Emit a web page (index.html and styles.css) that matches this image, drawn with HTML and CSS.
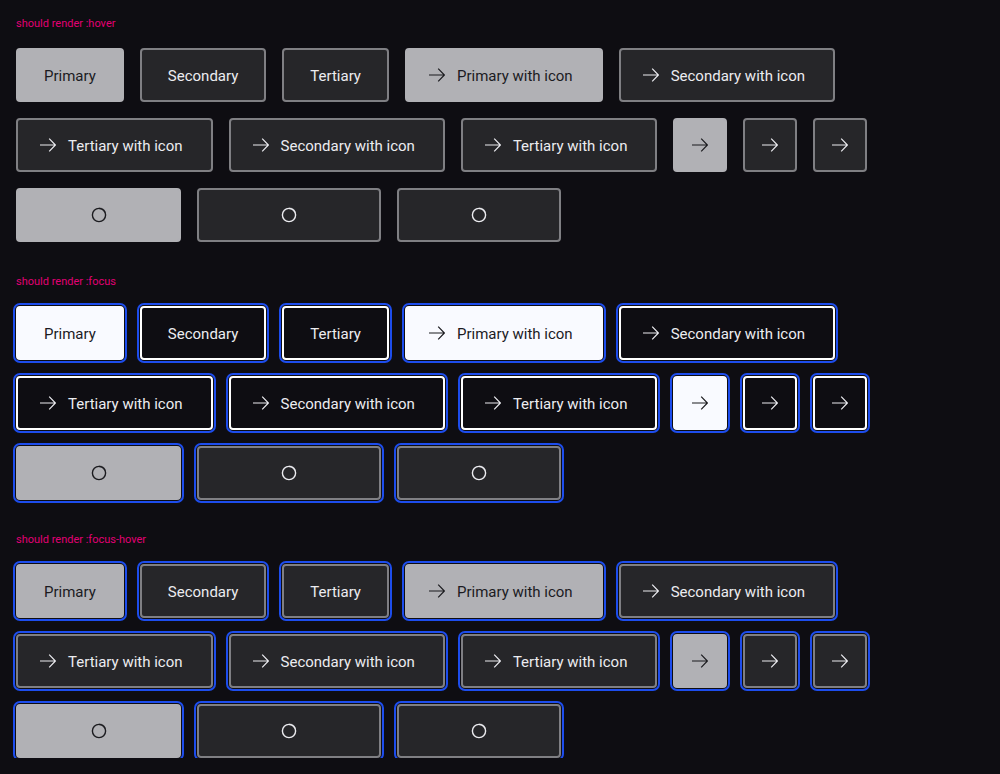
FILE: index.html
```html
<!DOCTYPE html>
<html>
<head>
<meta charset="utf-8">
<link rel="stylesheet" href="styles.css">
</head>
<body>
<svg width="0" height="0" style="position:absolute">
  <defs>
    <symbol id="arrow" viewBox="0 0 16 16">
      <path d="M0 8 H15.4 M9.2 1.6 L15.4 8 L9.2 14.4" fill="none" stroke="currentColor" stroke-width="1.2"/>
    </symbol>
    <symbol id="spin" viewBox="0 0 16 16">
      <circle cx="8" cy="8" r="6.6" fill="none" stroke="currentColor" stroke-width="1.4"/>
      <path d="M8 1.4 A6.6 6.6 0 0 1 14.2 5.8" fill="none" stroke="currentColor" stroke-opacity="0.5" stroke-width="1.6" class="fade"/>
    </symbol>
  </defs>
</svg>

<section class="section hover">
  <div class="label">should render :hover</div>
  <div class="rows">
    <div class="row">
      <button class="btn primary">Primary</button>
      <button class="btn secondary">Secondary</button>
      <button class="btn tertiary">Tertiary</button>
      <button class="btn primary with-icon"><svg class="ic"><use href="#arrow"/></svg>Primary with icon</button>
      <button class="btn secondary with-icon"><svg class="ic"><use href="#arrow"/></svg>Secondary with icon</button>
    </div>
    <div class="row">
      <button class="btn tertiary with-icon"><svg class="ic"><use href="#arrow"/></svg>Tertiary with icon</button>
      <button class="btn secondary with-icon"><svg class="ic"><use href="#arrow"/></svg>Secondary with icon</button>
      <button class="btn tertiary with-icon"><svg class="ic"><use href="#arrow"/></svg>Tertiary with icon</button>
      <button class="btn primary icon-only"><svg class="ic"><use href="#arrow"/></svg></button>
      <button class="btn secondary icon-only"><svg class="ic"><use href="#arrow"/></svg></button>
      <button class="btn tertiary icon-only"><svg class="ic"><use href="#arrow"/></svg></button>
    </div>
    <div class="row">
      <button class="btn primary loading w-p"><svg class="sp"><use href="#spin"/></svg></button>
      <button class="btn secondary loading w-s"><svg class="sp"><use href="#spin"/></svg></button>
      <button class="btn tertiary loading w-t"><svg class="sp"><use href="#spin"/></svg></button>
    </div>
  </div>
</section>

<section class="section focus">
  <div class="label">should render :focus</div>
  <div class="rows">
    <div class="row">
      <button class="btn primary">Primary</button>
      <button class="btn secondary">Secondary</button>
      <button class="btn tertiary">Tertiary</button>
      <button class="btn primary with-icon"><svg class="ic"><use href="#arrow"/></svg>Primary with icon</button>
      <button class="btn secondary with-icon"><svg class="ic"><use href="#arrow"/></svg>Secondary with icon</button>
    </div>
    <div class="row">
      <button class="btn tertiary with-icon"><svg class="ic"><use href="#arrow"/></svg>Tertiary with icon</button>
      <button class="btn secondary with-icon"><svg class="ic"><use href="#arrow"/></svg>Secondary with icon</button>
      <button class="btn tertiary with-icon"><svg class="ic"><use href="#arrow"/></svg>Tertiary with icon</button>
      <button class="btn primary icon-only"><svg class="ic"><use href="#arrow"/></svg></button>
      <button class="btn secondary icon-only"><svg class="ic"><use href="#arrow"/></svg></button>
      <button class="btn tertiary icon-only"><svg class="ic"><use href="#arrow"/></svg></button>
    </div>
    <div class="row">
      <button class="btn primary loading w-p"><svg class="sp"><use href="#spin"/></svg></button>
      <button class="btn secondary loading w-s"><svg class="sp"><use href="#spin"/></svg></button>
      <button class="btn tertiary loading w-t"><svg class="sp"><use href="#spin"/></svg></button>
    </div>
  </div>
</section>

<section class="section focus-hover">
  <div class="label">should render :focus-hover</div>
  <div class="rows">
    <div class="row">
      <button class="btn primary">Primary</button>
      <button class="btn secondary">Secondary</button>
      <button class="btn tertiary">Tertiary</button>
      <button class="btn primary with-icon"><svg class="ic"><use href="#arrow"/></svg>Primary with icon</button>
      <button class="btn secondary with-icon"><svg class="ic"><use href="#arrow"/></svg>Secondary with icon</button>
    </div>
    <div class="row">
      <button class="btn tertiary with-icon"><svg class="ic"><use href="#arrow"/></svg>Tertiary with icon</button>
      <button class="btn secondary with-icon"><svg class="ic"><use href="#arrow"/></svg>Secondary with icon</button>
      <button class="btn tertiary with-icon"><svg class="ic"><use href="#arrow"/></svg>Tertiary with icon</button>
      <button class="btn primary icon-only"><svg class="ic"><use href="#arrow"/></svg></button>
      <button class="btn secondary icon-only"><svg class="ic"><use href="#arrow"/></svg></button>
      <button class="btn tertiary icon-only"><svg class="ic"><use href="#arrow"/></svg></button>
    </div>
    <div class="row">
      <button class="btn primary loading w-p"><svg class="sp"><use href="#spin"/></svg></button>
      <button class="btn secondary loading w-s"><svg class="sp"><use href="#spin"/></svg></button>
      <button class="btn tertiary loading w-t"><svg class="sp"><use href="#spin"/></svg></button>
    </div>
  </div>
</section>
</body>
</html>
```

FILE: styles.css
```css
html, body {
  margin: 0;
  padding: 0;
  background: #0e0d12;
}
body {
  padding: 17px 16px 0 16px;
  font-family: Roboto, "Liberation Sans", sans-serif;
  display: flex;
  flex-direction: column;
  gap: 33px;
}
.section {
  display: flex;
  flex-direction: column;
  gap: 18px;
}
.label {
  color: #e20074;
  font-size: 11px;
  line-height: 13px;
  height: 13px;
}
.rows {
  display: flex;
  flex-direction: column;
  gap: 16px;
}
.row {
  display: flex;
  gap: 16px;
}
.btn {
  box-sizing: border-box;
  height: 54px;
  margin: 0;
  padding: 1px 26px 0 26px;
  border: 2px solid transparent;
  border-radius: 4px;
  display: inline-flex;
  align-items: center;
  justify-content: center;
  font-family: Roboto, "Liberation Sans", sans-serif;
  font-size: 15px;
  line-height: 20px;
  white-space: nowrap;
  cursor: pointer;
}
.with-icon {
  padding-left: 22px;
  padding-right: 28px;
  gap: 12px;
}
.icon-only {
  width: 54px;
  padding: 0;
}
.loading {
  padding: 0;
}
.w-p { width: 165px; }
.w-s { width: 184px; }
.w-t { width: 164px; }
.ic {
  width: 16px;
  height: 16px;
  flex: none;
  margin-top: -1px;
}
.sp {
  width: 16px;
  height: 16px;
  flex: none;
}

/* hover */
.primary {
  background: #b1b1b5;
  border-color: #b1b1b5;
  color: #1b1b1f;
}
.secondary, .tertiary {
  background: #262629;
  border-color: #7f7f83;
  color: #ececf0;
}

/* focus */
.focus .btn, .focus-hover .btn {
  outline: 2px solid #1d4ded;
  outline-offset: 1px;
}
.focus .primary {
  background: #f9faff;
  border-color: #f9faff;
  color: #1b1b1f;
}
.focus .secondary, .focus .tertiary {
  background: #0e0d12;
  border-color: #ffffff;
  color: #ececf0;
}
.focus .primary.loading {
  background: #b1b1b5;
  border-color: #b1b1b5;
}
.focus .secondary.loading, .focus .tertiary.loading {
  background: #262629;
  border-color: #7f7f83;
}
```
